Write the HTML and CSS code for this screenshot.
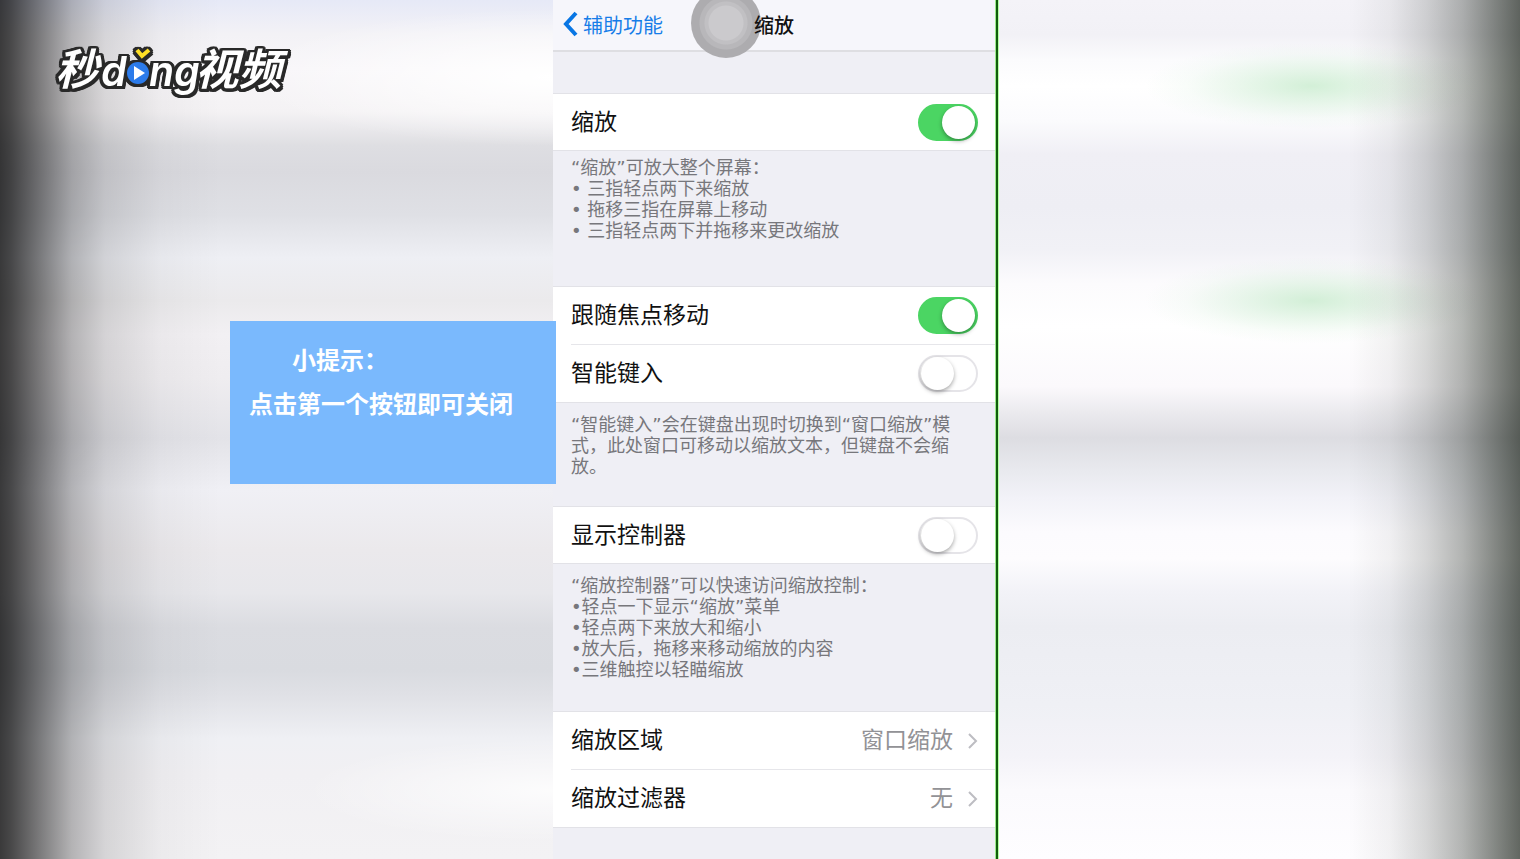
FILE: index.html
```html
<!DOCTYPE html>
<html lang="zh-CN">
<head>
<meta charset="utf-8">
<meta name="viewport" content="width=device-width, initial-scale=1">
<title>缩放</title>
<link rel="stylesheet" href="styles.css">
</head>
<body>
<main class="stage">
  <aside class="side side-left">
    <svg class="logo" viewBox="0 -20 250 100" role="img" aria-label="秒dong视频">
      <g class="logo-word">
        <text class="logo-cjk" transform="skewX(-14)" x="16" y="42">秒</text>
        <text class="logo-latin" x="51" y="43">d</text>
        <text class="logo-latin" x="99" y="43">ng</text>
        <text class="logo-cjk" transform="skewX(-14)" x="156" y="42">视频</text>
        <circle class="logo-disc" cx="88" cy="30" r="11"/>
        <path class="logo-tick" d="M87 7l5 6 7-6"/>
      </g>
      <path class="logo-play" d="M84 23v14l11-7z"/>
    </svg>
    <section class="tip">
      <h2 class="tip-title">小提示：</h2>
      <p class="tip-text">点击第一个按钮即可关闭</p>
    </section>
  </aside>

  <div class="phone">
    <header class="nav">
      <a class="back" href="#">
        <svg class="back-icon" viewBox="0 0 15 26" aria-hidden="true"><path d="M13 2L3 13l10 11"/></svg>辅助功能</a>
      <h1 class="nav-title">缩放</h1>
      <span class="touch" aria-hidden="true"></span>
    </header>

    <section class="block block-first">
      <div class="rows">
        <label class="row"><span>缩放</span><input class="switch" type="checkbox" role="switch" checked></label>
      </div>
      <div class="note note-tight">
        <p>“缩放”可放大整个屏幕：</p>
        <p>• 三指轻点两下来缩放</p>
        <p>• 拖移三指在屏幕上移动</p>
        <p>• 三指轻点两下并拖移来更改缩放</p>
      </div>
    </section>

    <section class="block block-focus">
      <div class="rows">
        <label class="row"><span>跟随焦点移动</span><input class="switch" type="checkbox" role="switch" checked></label>
        <label class="row"><span>智能键入</span><input class="switch" type="checkbox" role="switch"></label>
      </div>
      <div class="note">
        <p>“智能键入”会在键盘出现时切换到“窗口缩放”模式，此处窗口可移动以缩放文本，但键盘不会缩放。</p>
      </div>
    </section>

    <section class="block block-control">
      <div class="rows">
        <label class="row"><span>显示控制器</span><input class="switch" type="checkbox" role="switch"></label>
      </div>
      <div class="note">
        <p>“缩放控制器”可以快速访问缩放控制：</p>
        <p>•轻点一下显示“缩放”菜单</p>
        <p>•轻点两下来放大和缩小</p>
        <p>•放大后，拖移来移动缩放的内容</p>
        <p>•三维触控以轻瞄缩放</p>
      </div>
    </section>

    <section class="block">
      <div class="rows">
        <a class="row" href="#"><span>缩放区域</span><span class="value">窗口缩放</span><svg class="chevron" viewBox="0 0 10 16" aria-hidden="true"><path d="M1 1l7 7-7 7"/></svg></a>
        <a class="row" href="#"><span>缩放过滤器</span><span class="value">无</span><svg class="chevron" viewBox="0 0 10 16" aria-hidden="true"><path d="M1 1l7 7-7 7"/></svg></a>
      </div>
    </section>
  </div>

  <aside class="side side-right"></aside>
</main>
</body>
</html>
```

FILE: styles.css
```css
* { box-sizing: border-box; }

body {
  margin: 0;
  font-family: "DejaVu Sans", "Noto Sans CJK SC", sans-serif;
  color: #111;
}

h1, h2, p { margin: 0; }
a { color: inherit; text-decoration: none; }

.stage {
  display: grid;
  grid-template-columns: 553fr 446px 521fr;
  min-height: 100vh;
}

/* Blurred backdrop */
.side-left {
  position: relative;
  z-index: 2;
  display: flex;
  flex-direction: column;
  align-items: flex-start;
  padding-top: 23px;
  background:
    linear-gradient(90deg, rgb(0 0 0 / .76), rgb(0 0 0 / .7) 2%, rgb(0 0 0 / .54) 6%, rgb(0 0 0 / .26) 13%, rgb(0 0 0 / .12) 19%, rgb(0 0 0 / .03) 29%, transparent 40%),
    radial-gradient(55% 8% at 100% 9%, #fff, transparent),
    radial-gradient(45% 6% at 100% 92%, rgb(255 255 255 / .8), transparent),
    linear-gradient(#e6e9f7, #f3f2f6 4%, #f8f6f9 8%, #f4f2f4 13%, #dedee2 17%, #dadadf 20%, #dfe0e5 25%, #eeeff4 30%, #ebeaec 35%, #f2f0f3 39%, #efedf0 44%, #e3e3e8 51%, #f0f0f5 57%, #ebe9ec 64%, #e7e7eb 69%, #dbdce1 73%, #d9dbe0 78%, #e0e1e6 81%, #eff0f4 86%, #f1f0f3 90%, #f3f2f4);
}

.side-right {
  background:
    linear-gradient(270deg, rgb(10 18 8 / .64), rgb(10 18 8 / .52) 4%, rgb(10 18 8 / .31) 11%, rgb(10 18 8 / .16) 18%, rgb(10 18 8 / .05) 25%, transparent 33%),
    radial-gradient(32% 5% at 60% 10%, rgb(196 234 202 / .75), rgb(196 234 202 / .35) 45%, rgb(196 234 202 / .1) 75%, transparent),
    radial-gradient(32% 5% at 60% 35%, rgb(196 234 202 / .75), rgb(196 234 202 / .35) 45%, rgb(196 234 202 / .1) 75%, transparent),
    linear-gradient(#f4f3f8, #f2f1f6 4%, #fbfbfd 7%, #fff 10%, #fbfbfd 14%, #f0eff5 18%, #eeeef4 24%, #f1f1f6 29%, #fcfbfd 33%, #fff 38%, #fbf9fc 45%, #ebeaee 48%, #dddde2 51%, #e9eaef 55%, #f2f2f8 58%, #fcfbfe 62%, #fdfcfe 65%, #f2f2f7 69%, #ecedf2 73%, #eff0f5 82%, #f4f3f8 88%, #fbfafd 92%, #fefdff);
}

/* Brand mark */
.logo { width: 250px; height: 100px; margin-left: 50px; }
.logo-word {
  fill: #fff;
  filter: drop-shadow(2px 0 #292929) drop-shadow(-2px 0 #292929) drop-shadow(0 2px #292929) drop-shadow(0 -2px #292929) drop-shadow(1px 1px #292929) drop-shadow(-1px 0 #292929);
}
.logo-cjk { font: 700 43px "Noto Sans CJK SC", sans-serif; }
.logo-latin { font: italic 600 41px Inter, sans-serif; }
.logo-tick { fill: none; stroke: #ffdf25; stroke-width: 4; }
.logo-disc { fill: #2c7bea; }
.logo-play { fill: #fff; }

.tip {
  align-self: flex-end;
  width: 326px;
  min-height: 163px;
  margin: 198px -3px 0 0;
  padding: 16px 19px;
  background: #7ab9fd;
  color: #fff;
  font-family: "Noto Sans CJK SC", sans-serif;
  font-size: 24px;
  line-height: 44px;
  white-space: nowrap;
}
.tip-title { padding-left: 43px; font-size: 24px; font-weight: 700; }
.tip-text { font-weight: 700; }

/* Phone screen */
.phone {
  background: #efeff5;
  border-right: 1px solid #b5ffa5;
  box-shadow: inset -2px 0 #105c0c, inset -3px 0 #9bea8c;
  padding-right: 3px;
}

.nav {
  position: relative;
  display: grid;
  grid-template-columns: 1fr auto 1fr;
  align-items: center;
  height: 52px;
  padding: 0 0 2px 10px;
  border-bottom: 2px solid #dedee2;
  background: #f6f6fb;
  font-size: 20px;
}
.back { display: flex; align-items: center; gap: 5px; color: #167de8; }
.back-icon { width: 15px; height: 26px; fill: none; stroke: #0876e4; stroke-width: 4; }
.nav-title { position: relative; z-index: 1; margin-right: 10px; font-size: 20px; font-weight: 500; }
.touch {
  position: absolute;
  top: -12px;
  left: 138px;
  width: 70px;
  height: 70px;
  border-radius: 50%;
  background: radial-gradient(circle, #cbcacd 0 17px, #c1c0c3 18px 21px, #b8b7ba 22px 26px, #adacaf 27px);
}

.block-first { padding-top: 41px; min-height: 234px; }
.block-focus { min-height: 220px; }
.block-control { min-height: 205px; }

.rows {
  border-top: 1px solid #e2e2e7;
  border-bottom: 1px solid #e2e2e7;
  background: linear-gradient(#e6e6ea, #e6e6ea) 18px 50% / 100% 1px no-repeat #fff;
}
.row {
  display: flex;
  align-items: center;
  height: 57px;
  padding: 0 17px 0 18px;
  font-size: 23px;
}
.row + .row { margin-top: 1px; }
.row:only-child { height: 56px; background: #fff; }
.row > span { padding-bottom: 5px; }
.row > :first-child { flex: 1; }
.value { color: #929296; }
.chevron { width: 10px; height: 16px; margin-left: 15px; fill: none; stroke: #bdbdc2; stroke-width: 2; }

.switch {
  appearance: none;
  width: 60px;
  height: 37px;
  margin: 0;
  padding: 1px;
  border: 2px solid #e5e4e8;
  border-radius: 19px;
  background: #fff;
}
.switch::before {
  content: "";
  display: block;
  width: 33px;
  height: 33px;
  margin-top: -1px;
  border-radius: 50%;
  background: #fff;
  box-shadow: 0 2px 4px rgb(0 0 0 / .35);
}
.switch:checked { border-color: #4bd563; background: #4bd563; }
.switch:checked::before { margin-left: auto; }

.note {
  padding: 11px 18px 0;
  color: #77777c;
  font-size: 18px;
  line-height: 21px;
}
.note-tight { padding-top: 6px; }
```
